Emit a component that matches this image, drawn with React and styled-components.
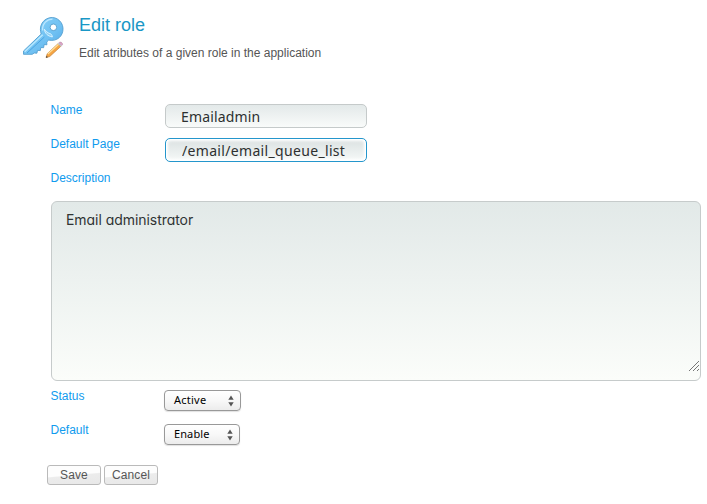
import React from "react";
import styled, { createGlobalStyle } from "styled-components";

const GlobalStyle = createGlobalStyle`
  * { box-sizing: border-box; }
  body { margin: 0; background: #fff; font-family: "Liberation Sans", Arial, sans-serif; }
`;

const Page = styled.main`
  width: 707px;
  height: 504px;
  padding: 15px 6px 0 22px;
  overflow: hidden;
`;

const Header = styled.header`
  display: flex;
  gap: 15px;
  height: 86px;
`;

const KeyIcon = styled.svg`
  width: 42px;
  height: 44px;
  flex: none;
`;

const Title = styled.h1`
  margin: 0;
  font-size: 18px;
  line-height: 20px;
  font-weight: 400;
  letter-spacing: 0;
  color: #1a97c6;
`;

const Subtitle = styled.p`
  margin: 11px 0 0;
  font-size: 12px;
  line-height: 14px;
  color: #555;
`;

const Form = styled.form`
  padding-left: 28px;
`;

const Row = styled.div`
  display: grid;
  grid-template-columns: 114px auto;
  justify-content: start;
  align-items: start;
  height: 34px;
`;

const Label = styled.label`
  padding: 2px 0 0 0.5px;
  font-size: 12px;
  line-height: 14px;
  color: #109bee;
`;

const TextInput = styled.input`
  width: 202px;
  height: 24px;
  margin: 3px 0 0 1px;
  padding: ${(p) => (p.$active ? "1px 0 0 16px" : "1px 0 0 15px")};
  border: 1px solid ${(p) => (p.$active ? "#2496cc" : "#c5caca")};
  border-radius: 5px;
  outline: none;
  background: ${(p) =>
    p.$active ? "linear-gradient(#dae1e1, #f6f9f8)" : "linear-gradient(#e3e9e9, #f9fbfa)"};
  box-shadow: ${(p) => (p.$active ? "inset 0 0 0 1px #fff, inset 0 0 3px 2px #fff" : "none")};
  font-family: "Noto Sans", sans-serif;
  font-size: 14px;
  letter-spacing: ${(p) => p.$spacing};
  color: #2d3030;
`;

const AreaBox = styled.div`
  display: grid;
  width: 650px;
  height: 180px;
  margin: -2px 0 6px 1px;
  border: 1px solid #c6cbcb;
  border-radius: 6px;
  background: linear-gradient(#e2e9e8, #fbfdfa);
`;

const TextArea = styled.textarea`
  grid-area: 1 / 1;
  padding: 9px 14px;
  border: 0;
  outline: none;
  resize: none;
  background: transparent;
  font-family: Inter, sans-serif;
  font-feature-settings: "cv11" 1;
  font-size: 14px;
  line-height: 18px;
  letter-spacing: -0.05px;
  color: #303434;
`;

const ResizeGrip = styled.svg`
  grid-area: 1 / 1;
  place-self: end;
  width: 12px;
  height: 12px;
  margin: 0 0 8px 0;
`;

const SelectButton = styled.button`
  display: flex;
  justify-content: space-between;
  align-items: center;
  width: ${(p) => p.$width};
  height: 21px;
  margin-top: 3px;
  padding: 0 6px 2px 9px;
  border: 1px solid #999;
  border-radius: 4px;
  background: linear-gradient(#fff, #f8f8f8 50%, #ececec);
  box-shadow: 0 1px 1px rgba(0, 0, 0, 0.12);
  font-family: "Noto Sans", sans-serif;
  font-size: 11px;
  letter-spacing: ${(p) => p.$spacing};
  color: #000;
`;

const SelectArrows = styled.svg`
  width: 6px;
  height: 12px;
  margin-top: 3px;
`;

const Actions = styled.div`
  display: flex;
  gap: 3px;
  margin: 10px 0 0 -3px;
`;

const ActionButton = styled.button`
  width: 54px;
  height: 20px;
  padding: 0;
  border: 1px solid #bababa;
  border-radius: 3px;
  background: linear-gradient(175deg, #fdfdfd 48%, #ececec 53%, #e8e8e8);
  font-family: "Liberation Sans", Arial, sans-serif;
  font-size: 12px;
  line-height: 18px;
  letter-spacing: 0.1px;
  color: #565656;
`;

function Arrows() {
  return (
    <SelectArrows viewBox="0 0 6 12" fill="#555">
      <path d="M3 .5 5.7 4.8H.3ZM.3 7.2h5.4L3 11.5Z" />
    </SelectArrows>
  );
}

function SelectField({ id, label, value, width, spacing }) {
  return (
    <Row>
      <Label htmlFor={id}>{label}</Label>
      <SelectButton id={id} type="button" $width={width} $spacing={spacing}>
        <span>{value}</span>
        <Arrows />
      </SelectButton>
    </Row>
  );
}

export default function App() {
  return (
    <>
      <GlobalStyle />
      <Page>
        <Header>
          <KeyIcon viewBox="0 0 42 44">
            <defs>
              <linearGradient id="keyBlue" x1="0" y1="0" x2="1" y2="1">
                <stop offset="0" stopColor="#8dd4f8" />
                <stop offset="0.6" stopColor="#6fc0f2" />
                <stop offset="1" stopColor="#4ba3e2" />
              </linearGradient>
            </defs>
            <path
              d="M1.5 36 19.2 19C17 12.5 19.6 6.4 24.8 3.8 32-.2 40.6 5.3 41 13.3c.3 8-6.2 13.5-14.3 11.8l-2 1.9.2 2.8-2.7-.3-.6 3.2-2.8-.2-.5 3.1-2.8-.2-.6 2.8-2.7-.2L10.3 39.3H1.5Z"
              fill="url(#keyBlue)"
              stroke="#559fd0"
              strokeWidth=".9"
              strokeLinejoin="round"
            />
            <path d="m2.7 36.8 18-17" stroke="#b7e8ff" strokeWidth="1.5" />
            <path d="m5 38 17.4-16" stroke="#4ba5e2" strokeWidth="1" />
            <path d="M20.6 15.5C20 9 24.8 4.2 30.5 4.2" fill="none" stroke="#bce7ff" strokeWidth="1.3" />
            <path d="M22.3 14.2c.7 4.2 3.3 7 8.1 7.7-.4-2-.9-2.8-2.5-3.3-2.4-.8-3.9-2.3-5.6-4.4Z" fill="#91d1f5" stroke="#e0f5ff" strokeWidth=".9" />
            <circle cx="31.4" cy="12.3" r="3.3" fill="#fff" stroke="#539dcc" strokeWidth=".9" />
            <path d="m24 42.7 1.2-4 10.7-9.9 2.8 2.7-10.9 10Z" fill="#f6a543" stroke="#b77732" strokeWidth=".6" />
            <path d="m25.8 39 10.8-9.7" stroke="#ffe09a" strokeWidth="1.2" />
            <path d="m36.7 28 .7-.6c1.5-1 4 .9 2.9 2.7l-.8.7Z" fill="#dca2c6" stroke="#aa829b" strokeWidth=".5" />
            <path d="m35.9 28.8 2.8 2.7.9-.8-2.8-2.7Z" fill="#bac4c9" />
            <path d="m24 42.7.5-1.9 1.4 1.4Z" fill="#444" />
          </KeyIcon>
          <div>
            <Title>Edit role</Title>
            <Subtitle>Edit atributes of a given role in the application</Subtitle>
          </div>
        </Header>
        <Form>
          <Row>
            <Label htmlFor="name">Name</Label>
            <TextInput id="name" defaultValue="Emailadmin" $spacing="0.15px" />
          </Row>
          <Row>
            <Label htmlFor="page">Default Page</Label>
            <TextInput id="page" defaultValue="/email/email_queue_list" $active $spacing="0.33px" />
          </Row>
          <Row>
            <Label htmlFor="description">Description</Label>
          </Row>
          <AreaBox>
            <TextArea id="description" defaultValue="Email administrator" />
            <ResizeGrip viewBox="0 0 12 12" stroke="#777" strokeWidth="1" fill="none">
              <path d="M1 11 11 1M5 11l6-6M9 11l2-2" />
            </ResizeGrip>
          </AreaBox>
          <SelectField id="status" label="Status" value="Active" width="77px" spacing="0.25px" />
          <SelectField id="default" label="Default" value="Enable" width="76px" spacing="0.1px" />
          <Actions>
            <ActionButton type="button">Save</ActionButton>
            <ActionButton type="button">Cancel</ActionButton>
          </Actions>
        </Form>
      </Page>
    </>
  );
}
